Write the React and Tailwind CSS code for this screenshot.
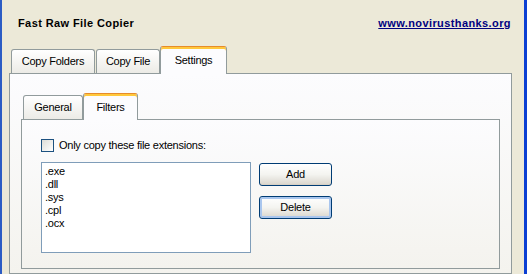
import React from 'react';

const font = "font-['Liberation_Sans',Arial,sans-serif]";

function Tab({ label, active, className = '' }) {
  if (active) {
    return (
      <div
        className={`relative z-10 -mb-px flex items-center justify-center rounded-t-[3px] border border-b-0 border-[#919B9C] border-t-[#E68B2C] bg-[#FCFCFE] shadow-[inset_0_2px_0_#FFC83C] ${className}`}
      >
        <span className="tracking-[-0.25px]">{label}</span>
      </div>
    );
  }
  return (
    <div
      className={`flex items-center justify-center rounded-t-[3px] border border-b-0 border-[#919B9C] bg-linear-to-b from-white to-[#ECEBE6] ${className}`}
    >
      <span className="tracking-[-0.25px]">{label}</span>
    </div>
  );
}

function Button({ children, focused }) {
  return (
    <button
      className={`flex h-[23px] w-[73px] items-center justify-center rounded-[3px] border border-[#003C74] bg-linear-to-b from-white via-[#F4F4F0] to-[#D9D5CC] text-black tracking-[-0.25px] ${
        focused ? 'shadow-[inset_0_0_0_2px_#A9C6EE]' : 'shadow-[inset_0_-1px_0_#D6D0C5]'
      }`}
    >
      {children}
    </button>
  );
}

export default function App() {
  const extensions = ['.exe', '.dll', '.sys', '.cpl', '.ocx'];

  return (
    <div className={`flex h-[274px] w-[527px] overflow-hidden bg-[#ECE9D8] text-[11px] text-black ${font}`}>
      {/* window frame left */}
      <div className="w-[2px] bg-[#2C5CC4]" />

      <div className="flex flex-1 flex-col pl-[7px] pr-[12px]">
        {/* Header */}
        <div className="flex h-[48px] items-center justify-between pl-[9px] pr-[1px]">
          <span className="font-bold tracking-[0.4px]">Fast Raw File Copier</span>
          <a href="#" className="font-bold tracking-[0.4px] text-[#000080] underline">
            www.novirusthanks.org
          </a>
        </div>

        {/* Main tabs */}
        <div className="flex h-[27px] items-end pl-[2px]">
          <Tab label="Copy Folders" className="h-[24px] w-[84px]" />
          <Tab label="Copy File" className="ml-[1px] h-[24px] w-[64px]" />
          <Tab label="Settings" active className="h-[28px] w-[67px]" />
        </div>

        {/* Outer panel */}
        <div className="flex h-[210px] flex-col border border-[#919B9C] bg-linear-to-b from-[#FCFCFE] to-[#F4F3EE] px-[11px] pt-[19px]">
          {/* Inner tabs */}
          <div className="flex h-[26px] items-end pl-[2px]">
            <Tab label="General" className="h-[24px] w-[60px]" />
            <Tab label="Filters" active className="h-[27px] w-[55px]" />
          </div>

          {/* Inner panel */}
          <div className="h-[150px] border border-[#919B9C] bg-linear-to-b from-[#FCFCFE] to-[#F4F3EE] p-[19px]">
            <label className="flex h-[13px] items-center gap-[5px]">
              <span className="h-[13px] w-[13px] border border-[#1C5180] bg-linear-to-br from-[#DCDCD7] to-white" />
              <span className="tracking-[-0.25px]">Only copy these file extensions:</span>
            </label>

            <div className="mt-[10px] flex gap-[8px]">
              <div className="h-[91px] w-[210px] border border-[#7F9DB9] bg-white pl-[3px] pt-[2px]">
                {extensions.map((ext) => (
                  <div key={ext} className="h-[13px] leading-[13px] tracking-[-0.25px]">
                    {ext}
                  </div>
                ))}
              </div>
              <div className="flex flex-col gap-[10px] pt-[1px]">
                <Button>Add</Button>
                <Button focused>Delete</Button>
              </div>
            </div>
          </div>
        </div>
      </div>

      {/* window frame right */}
      <div className="w-[3px] bg-[#0B3FD3]" />
    </div>
  );
}
